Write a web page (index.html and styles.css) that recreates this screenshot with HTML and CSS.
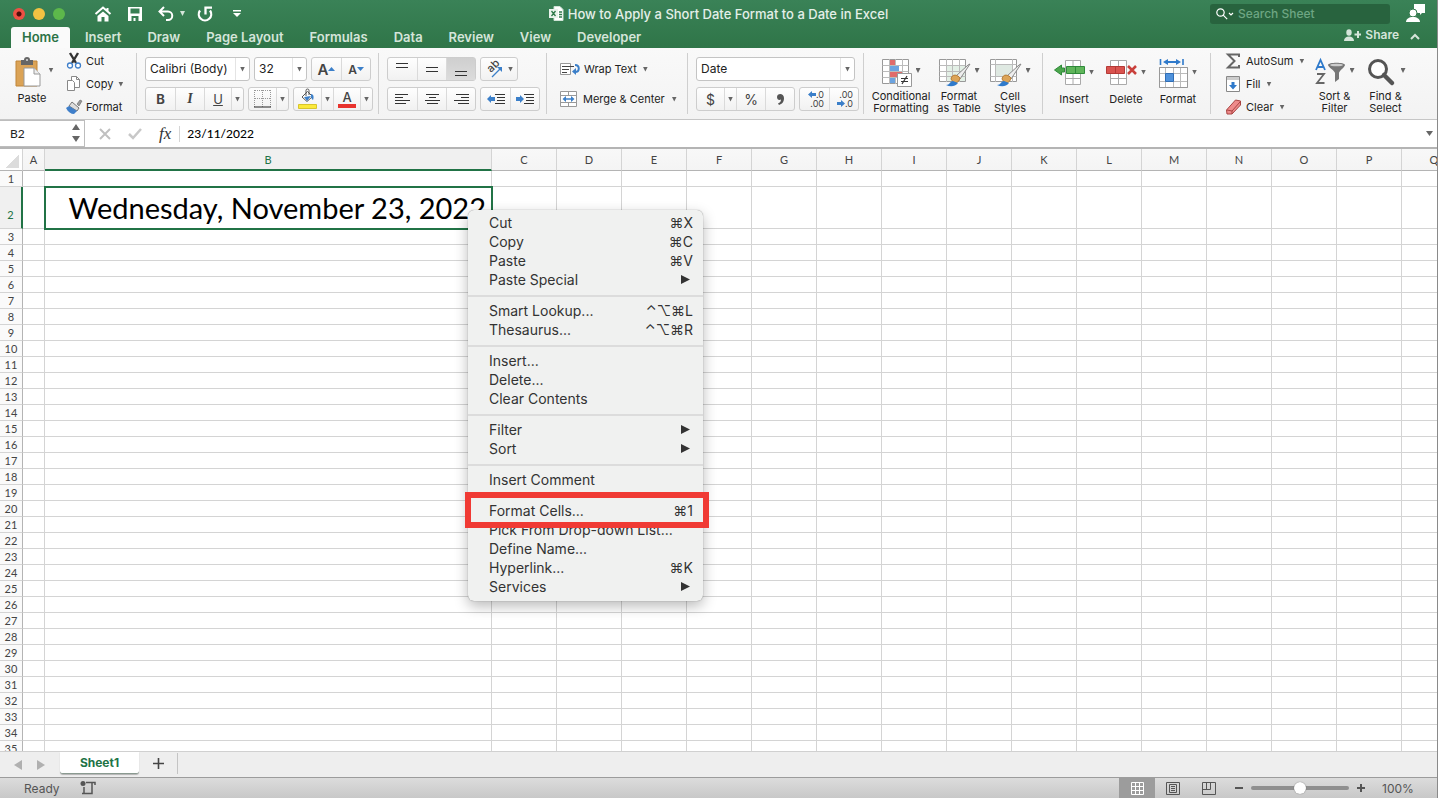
FILE: index.html
```
<!DOCTYPE html>
<html lang="en">
<head>
  <meta charset="UTF-8">
  <title>How to Apply a Short Date Format to a Date in Excel</title>
  <link rel="stylesheet" href="styles.css">
</head>
<body>

  <header class="top">
    <div class="titlebar">
      <div class="quick">
        <button class="light red" aria-label="Close"></button>
        <button class="light yellow" aria-label="Minimize"></button>
        <button class="light green" aria-label="Zoom"></button>
        <button class="q home" aria-label="Home"><svg width="18" height="16" viewBox="0 0 18 16"><path d="M1.500 8 9 1.500 16.500 8M13.500 2v3" fill="none" stroke="#fff" stroke-width="2"/><path d="M9 5.500 14.500 10v5.500H10.500V11h-3v4.500h-4V10z" fill="#fff"/></svg></button>
        <button class="q" aria-label="Save"><svg width="14" height="14" viewBox="0 0 14 14"><path d="M0 0h14v14H0zM2.500 1.500v5h9v-5zM3.500 9v5h2v-3h2v3h3V9z" fill="#fff" fill-rule="evenodd"/></svg></button>
        <button class="q undo" aria-label="Undo"><svg width="16" height="16" viewBox="0 0 16 16"><path d="M6 1 1.500 5.500 6 10M1.500 5.500h8.500a4.200 4.200 0 0 1 0 8.500H8" fill="none" stroke="#fff" stroke-width="2"/></svg></button>
        <i class="caret light-caret"></i>
        <button class="q redo" aria-label="Redo"><svg width="16" height="16" viewBox="0 0 16 16"><path d="M3 4.500A6.200 6.200 0 1 0 13 4.500M8.500 8.500V1.700H15" fill="none" stroke="#fff" stroke-width="2.300"/></svg></button>
        <button class="q" aria-label="Customize toolbar"><svg width="8" height="8" viewBox="0 0 8 8"><path d="M0 0h8v1.500H0zM0 3h8L4 7z" fill="#fff"/></svg></button>
      </div>
      <div class="doc">
        <svg width="15" height="15" viewBox="0 0 15 15"><path d="M5 .5h6l3 3v11H5z" fill="#fff" stroke="#cfe3d6"/><path d="M0 3h9v9H0z" fill="#e9f3ec"/><path d="m2.500 5 4 5m0-5-4 5M10 6h3M10 8.500h3M10 11h3" stroke="#2f7a4b" stroke-width="1.300"/></svg>
        <span>How to Apply a Short Date Format to a Date in Excel</span>
      </div>
      <div class="right">
        <label class="search">
          <svg width="18" height="12" viewBox="0 0 18 12"><circle cx="4.500" cy="4.500" r="3.700" fill="none" stroke="#fff" stroke-width="1.200"/><path d="m7.200 7.200 4 4M13 5l2 2 2-2" fill="none" stroke="#fff" stroke-width="1.200"/></svg>
          <input type="text" placeholder="Search Sheet" aria-label="Search Sheet">
        </label>
        <svg width="19" height="19" viewBox="0 0 19 19"><path d="M8 0h11v9h-3l-2 2V9H8z" fill="#fff"/><circle cx="7" cy="9" r="4" fill="#fff" stroke="#32794c"/><path d="M0 18c0-3 3-5 7-5s7 2 7 5z" fill="#fff"/></svg>
      </div>
    </div>
    <nav class="tabs">
      <button class="active">Home</button>
      <button>Insert</button>
      <button>Draw</button>
      <button>Page Layout</button>
      <button>Formulas</button>
      <button>Data</button>
      <button>Review</button>
      <button>View</button>
      <button>Developer</button>
      <button class="share"><svg width="17" height="12" viewBox="0 0 17 12"><ellipse cx="5" cy="3.500" rx="2.700" ry="3.300"/><path d="M0 12c0-3 2-4.500 5-4.500S10 9 10 12zM13 2h2v2.500h2v2h-2V9h-2V6.500h-2.500v-2H13z"/></svg>Share</button>
      <button class="collapse" aria-label="Collapse ribbon"><svg width="10" height="6" viewBox="0 0 10 6"><path d="m1 5 4-4 4 4" fill="none" stroke="#d5e5da" stroke-width="2"/></svg></button>
    </nav>
  </header>

  <section class="ribbon">
    <div class="group clipboard">
      <button class="big paste">
        <span class="pic"><svg width="26" height="30" viewBox="0 0 26 30"><path d="M1 4h21v25H1z" fill="#dba356" stroke="#c08538"/><path d="M6 3h3a3 3 0 0 1 6 0h3v5H6z" fill="#666"/><circle cx="12" cy="3" r="1" fill="#ddd"/><path d="M9 11h10l6 6v12H9z" fill="#fff" stroke="#999"/><path d="M19 11v6h6" fill="#eee" stroke="#999"/></svg><i class="caret"></i></span>
        Paste
      </button>
      <div class="stack">
        <button><svg width="16" height="16" viewBox="0 0 16 16"><path d="m4 0 6 10M12 0 6 10" stroke="#333" stroke-width="2.400"/><circle cx="4" cy="12.500" r="2.500" fill="#fff" stroke="#3f7fca" stroke-width="1.300"/><circle cx="12" cy="12.500" r="2.500" fill="#fff" stroke="#3f7fca" stroke-width="1.300"/></svg>Cut</button>
        <button><svg width="16" height="16" viewBox="0 0 16 16"><path d="M5.500.5h5l3 3v8h-8z" fill="#fff" stroke="#888"/><path d="M10.500.5v3h3" fill="none" stroke="#888"/><path d="M1.500 4.500h5l2 2v8h-7z" fill="#fff" stroke="#888"/></svg>Copy<i class="caret"></i></button>
        <button><svg width="16" height="16" viewBox="0 0 16 16"><path d="m11 5 3-4 2 1-3 5z" fill="#999" stroke="#666" stroke-width=".6"/><path d="m6 3 7 6-2 3-8-5z" fill="#ddd" stroke="#777"/><path d="m3 7 8 5-3 3c-3 0-6-2-8-6z" fill="#3f7fca"/></svg>Format</button>
      </div>
    </div>

    <div class="group font">
      <div class="row">
        <label class="select name"><select aria-label="Font"><option>Calibri (Body)</option></select><i class="caret"></i></label>
        <label class="select size"><select aria-label="Font size"><option>32</option></select><i class="caret"></i></label>
        <div class="set">
          <button aria-label="Increase font size"><b class="a-big">A</b><svg width="7" height="4" viewBox="0 0 7 4"><path d="M0 4h7L3.500 0z" fill="#3b7fc9"/></svg></button>
          <button aria-label="Decrease font size"><b class="a-small">A</b><svg width="7" height="4" viewBox="0 0 7 4"><path d="M0 0h7L3.500 4z" fill="#3b7fc9"/></svg></button>
        </div>
      </div>
      <div class="row">
        <div class="set">
          <button><b>B</b></button>
          <button><em>I</em></button>
          <button class="pair"><u>U</u></button>
          <button class="drop" aria-label="Underline style"><i class="caret"></i></button>
        </div>
        <div class="set">
          <button class="pair" aria-label="Borders"><svg width="18" height="18" viewBox="0 0 18 18"><path d="M1 .5h16M1 8.500h16M.5 0v17M8.500 0v17M16.500 0v17" stroke="#999" stroke-dasharray="1 1"/><path d="M0 17h17" stroke="#222"/></svg></button>
          <button class="drop" aria-label="Border style"><i class="caret"></i></button>
        </div>
        <div class="set">
          <button class="pair" aria-label="Fill color"><svg width="19" height="20" viewBox="0 0 19 20"><path d="M5 7 9.500 2.500l5 5L9 12.500 4 8z" fill="#fff" stroke="#555"/><path d="M8 7V1.500a1.500 1.500 0 0 1 3 0V6" fill="none" stroke="#555"/><path d="m6 8 7-1-4 5zM13 5c3 0 3 4 2 6-2-1-2-3-2-6" fill="#3b7fc9"/><path d="M.5 15.500h18v4H.5z" fill="#fbe93a" stroke="#d8c52c"/></svg></button>
          <button class="drop" aria-label="Fill palette"><i class="caret"></i></button>
          <button class="pair font-color" aria-label="Font color"><b>A</b></button>
          <button class="drop" aria-label="Font palette"><i class="caret"></i></button>
        </div>
      </div>
    </div>

    <div class="group align">
      <div class="row">
        <div class="set">
          <button aria-label="Top align"><svg width="15" height="16" viewBox="0 0 15 16"><path d="M1 2.500h12M1 6.500h12" stroke="#333"/></svg></button>
          <button aria-label="Middle align"><svg width="15" height="16" viewBox="0 0 15 16"><path d="M1 6.500h12M1 10.500h12" stroke="#333"/></svg></button>
          <button class="on" aria-label="Bottom align"><svg width="15" height="16" viewBox="0 0 15 16"><path d="M1 10.500h12M1 14.500h12" stroke="#333"/></svg></button>
        </div>
        <div class="set">
          <button class="angle" aria-label="Orientation"><svg width="18" height="18" viewBox="0 0 18 18"><text transform="translate(6 13) rotate(-45)" font-family="Inter, sans-serif" font-size="11" font-weight="500" fill="#444">ab</text><path d="m7 17 8-8" stroke="#3b7fc9" stroke-width="1.300"/><path d="M17 7v5l-5-5z" fill="#3b7fc9"/></svg><i class="caret"></i></button>
        </div>
      </div>
      <div class="row">
        <div class="set">
          <button aria-label="Align left"><svg width="15" height="12" viewBox="0 0 15 12"><path d="M0 1.500h13M0 4.500h8M0 7.500h15M0 10.500h11" stroke="#333"/></svg></button>
          <button aria-label="Center"><svg width="15" height="12" viewBox="0 0 15 12"><path d="M1 1.500h13M4 4.500h7M0 7.500h15M2 10.500h11" stroke="#333"/></svg></button>
          <button aria-label="Align right"><svg width="15" height="12" viewBox="0 0 15 12"><path d="M2 1.500h13M7 4.500h8M0 7.500h15M4 10.500h11" stroke="#333"/></svg></button>
        </div>
        <div class="set">
          <button aria-label="Decrease indent"><svg width="18" height="12" viewBox="0 0 18 12"><path d="M8 1.500h10M10 4.500h8M10 7.500h8M8 10.500h10" stroke="#333"/><path d="M0 6 4 2v2h4v4H4v2z" fill="#3b7fc9"/></svg></button>
          <button aria-label="Increase indent"><svg width="18" height="12" viewBox="0 0 18 12"><path d="M8 1.500h10M10 4.500h8M10 7.500h8M8 10.500h10" stroke="#333"/><path d="M8 6 4 2v2H0v4h4v2z" fill="#3b7fc9"/></svg></button>
        </div>
      </div>
    </div>

    <div class="group wrap">
      <button><svg width="20" height="14" viewBox="0 0 20 14"><path d="M.5 1.500h10v11H.5z" fill="#fff" stroke="#999"/><path d="M2 4.500h12M2 7.500h7M2 10.500h5" stroke="#444"/><path d="M15 3c5 0 5 7 0 7" fill="none" stroke="#3b7fc9" stroke-width="2"/><path d="M16 6v7l-4-3.500z" fill="#3b7fc9"/></svg>Wrap Text<i class="caret"></i></button>
      <button class="merge"><svg width="18" height="16" viewBox="0 0 18 16"><path d="M.5.5h16v15H.5zM.5 4.500h16M.5 11.500h16M8.500.5v4M8.500 11.500v4" fill="#fff" stroke="#999"/><path d="M4 8h9" stroke="#3b7fc9" stroke-width="1.500"/><path d="M6 5v6L2.500 8zM11 5v6l3.500-3z" fill="#3b7fc9"/></svg>Merge &amp; Center<i class="caret"></i></button>
    </div>

    <div class="group number">
      <div class="row">
        <label class="select format"><select aria-label="Number format"><option>Date</option></select><i class="caret"></i></label>
      </div>
      <div class="row">
        <div class="set">
          <button class="pair sign">$</button>
          <button class="drop" aria-label="Currency"><i class="caret"></i></button>
          <button class="sign">%</button>
          <button aria-label="Comma style"><svg width="7" height="11" viewBox="0 0 7 11"><path d="M0 3c0-4 7-4 7 1 0 4-2 6-5 7L1 9.500c2-1 3-2 3-4C2 6.500 0 5.500 0 3" fill="#555"/></svg></button>
        </div>
        <div class="set">
          <button class="decimals"><span class="line"><svg width="8" height="7" viewBox="0 0 8 7"><path d="M0 3.500 4 0v2h4v3H4v2z" fill="#3b7fc9"/></svg>.0</span><span class="line">.00</span></button>
          <button class="decimals"><span class="line">.00</span><span class="line"><svg width="8" height="7" viewBox="0 0 8 7"><path d="M8 3.500 4 0v2H0v3h4v2z" fill="#3b7fc9"/></svg>.0</span></button>
        </div>
      </div>
    </div>

    <div class="group styles">
      <button class="big wide">
        <span class="pic"><svg width="31" height="28" viewBox="0 0 31 28"><path d="M.5.5h26v24H.5z" fill="#fff" stroke="#999"/><path d="M.5 6.500h26M.5 12.500h26M.5 18.500h26M7.500 0v25M13.500 0v25M20.500 0v25" stroke="#bbb"/><path d="M8 1h5v5H8zM8 13h12v5H8z" fill="#e06b6b"/><path d="M8 7h9v5H8zM8 19h5v5H8z" fill="#6ba3e0"/><path d="M15.500 14.500h14v13h-14z" fill="#fff" stroke="#999"/><path d="M19 19.500h7M19 22.500h7M25 17l-5 8" stroke="#333" stroke-width="1.200"/></svg><i class="caret"></i></span>
        Conditional<br>Formatting
      </button>
      <button class="big">
        <span class="pic"><svg width="33" height="28" viewBox="0 0 33 28"><path d="M.5.5h26v22H.5z" fill="#fff" stroke="#999"/><path d="M8 7h18v15H8z" fill="#e3f0e6"/><path d="M.5 6.500h26M.5 12.500h26M.5 17.500h26M7.500 0v23M13.500 0v23M20.500 0v23" stroke="#bbb"/><path d="M31 5 21 20l-4-3L29 6z" fill="#eee" stroke="#888"/><path d="M12 20c1-6 7-4 9-1-1 5-6 7-9 1" fill="#dca457" stroke="#b57c34"/><path d="M7 26c4 0 4-4 7-4l5 2c-3 4-8 4-12 2" fill="#2f7acb"/></svg><i class="caret"></i></span>
        Format<br>as Table
      </button>
      <button class="big">
        <span class="pic"><svg width="33" height="28" viewBox="0 0 33 28"><path d="M.5.5h26v22H.5z" fill="#fff" stroke="#999"/><path d="M.5 5.500h26M.5 17.500h26M5.500 0v23M22.500 0v23" stroke="#bbb"/><path d="M6 6h16v11H6z" fill="#dfe9e2"/><path d="M31 5 21 20l-4-3L29 6z" fill="#eee" stroke="#888"/><path d="M12 20c1-6 7-4 9-1-1 5-6 7-9 1" fill="#dca457" stroke="#b57c34"/><path d="M7 26c4 0 4-4 7-4l5 2c-3 4-8 4-12 2" fill="#2f7acb"/></svg><i class="caret"></i></span>
        Cell<br>Styles
      </button>
    </div>

    <div class="group cells">
      <button class="big">
        <span class="pic"><svg width="32" height="28" viewBox="0 0 32 28"><path d="M11.500.5h15v24h-15zM19 0v25M11 18.500h16" fill="#fff" stroke="#aaa"/><path d="M12.500 6.500h18v7h-18zM21.500 6v8" fill="#5fb55a" stroke="#2f8a3a"/><path d="m.5 10 7-5v3h3v4h-3v3z" fill="#4ca64c" stroke="#2f8a3a"/></svg><i class="caret"></i></span>
        Insert
      </button>
      <button class="big">
        <span class="pic"><svg width="32" height="28" viewBox="0 0 32 28"><path d="M4.500.5h16v24h-16zM12.500 0v25M4 18.500h17" fill="#fff" stroke="#aaa"/><path d="M.5 6.500h18v7H.5zM9.500 6v8" fill="#d9534f" stroke="#b53a37"/><path d="m22 6 8 8m0-8-8 8" stroke="#c9403b" stroke-width="2.500"/></svg><i class="caret"></i></span>
        Delete
      </button>
      <button class="big">
        <span class="pic"><svg width="30" height="30" viewBox="0 0 30 30"><path d="M1.500 0v6M24 0v6" stroke="#2f7acb" stroke-width="1.600"/><path d="M6 3h14" stroke="#2f7acb" stroke-width="2"/><path d="M9 0v6L4 3zM17 0v6l5-3z" fill="#2f7acb"/><path d="M.5 8.500h28v20H.5zM.5 14.500h28M.5 22.500h28M6.500 8v21M14.500 8v21M21.500 8v21" fill="#fff" stroke="#bbb"/><path d="M.5 8.500h28v20H.5z" fill="none" stroke="#999"/><path d="M6.500 14.500h8v8h-8z" fill="#4f92dc" stroke="#2f6db5"/></svg><i class="caret"></i></span>
        Format
      </button>
    </div>

    <div class="group editing">
      <div class="stack">
        <button><svg width="15" height="16" viewBox="0 0 15 16"><path d="M13 4V1.500H2L8.500 8 2 14.500h11V12" fill="none" stroke="#666" stroke-width="2"/></svg>AutoSum<i class="caret"></i></button>
        <button><svg width="15" height="16" viewBox="0 0 15 16"><path d="M.5.5h13v15H.5z" fill="#fff" stroke="#888"/><path d="M1 1h12v3H1z" fill="#ccc"/><path d="M5.500 6h3v3H11l-4 4.500L3 9h2.500z" fill="#2f7acb"/></svg>Fill<i class="caret"></i></button>
        <button><svg width="15" height="16" viewBox="0 0 15 16"><path d="m.5 11 9-10 5 1v4L6 15H1z" fill="#ee8b8b" stroke="#a94442"/><path d="m1 11 5 1v3M6 12l8-9" fill="none" stroke="#a94442"/></svg>Clear<i class="caret"></i></button>
      </div>
      <button class="big">
        <span class="pic"><svg width="32" height="28" viewBox="0 0 32 28"><path d="M1 11 5.500 1 10 11M2.500 8h6" fill="none" stroke="#2f7acb" stroke-width="1.800"/><path d="M2 15h7L2 24h7.500" fill="none" stroke="#666" stroke-width="1.800"/><path d="M13 6c0-3 17-3 17 0 0 2-6 6-6 8v6l-4 3v-9c0-2-7-6-7-8" fill="#777"/><ellipse cx="21.500" cy="6" rx="6.500" ry="1.300" fill="#ccc"/></svg><i class="caret"></i></span>
        Sort &amp;<br>Filter
      </button>
      <button class="big">
        <span class="pic"><svg width="32" height="28" viewBox="0 0 32 28"><circle cx="12" cy="10" r="8.500" fill="#fff" stroke="#555" stroke-width="3"/><path d="m18 16 8 8" stroke="#555" stroke-width="4.500" stroke-linecap="round"/></svg><i class="caret"></i></span>
        Find &amp;<br>Select
      </button>
    </div>
  </section>

  <section class="formula-bar">
    <div class="name-box">
      <input type="text" value="B2" aria-label="Name box">
      <svg width="8" height="19" viewBox="0 0 8 19"><path d="M0 6h8L4 0zM0 12h8l-4 6z" fill="#666"/></svg>
    </div>
    <button aria-label="Cancel"><svg width="12" height="12" viewBox="0 0 12 12"><path d="m1 1 10 10M11 1 1 11" stroke="#c0c0c0" stroke-width="2"/></svg></button>
    <button aria-label="Enter"><svg width="14" height="12" viewBox="0 0 14 12"><path d="m1 6 4 4 8-9" fill="none" stroke="#c8c8c8" stroke-width="2.500"/></svg></button>
    <button class="fx">fx</button>
    <input class="formula" type="text" value="23/11/2022" aria-label="Formula">
    <i class="caret expand"></i>
  </section>

  <main class="sheet">
    <table id="grid">
      <colgroup></colgroup>
      <thead></thead>
      <tbody></tbody>
    </table>

    <ul class="menu">
      <li>Cut<span>⌘X</span></li>
      <li>Copy<span>⌘C</span></li>
      <li>Paste<span>⌘V</span></li>
      <li>Paste Special<i class="sub"></i></li>
      <li class="sep"></li>
      <li>Smart Lookup...<span>⌃⌥⌘L</span></li>
      <li>Thesaurus...<span>⌃⌥⌘R</span></li>
      <li class="sep"></li>
      <li>Insert...</li>
      <li>Delete...</li>
      <li>Clear Contents</li>
      <li class="sep"></li>
      <li>Filter<i class="sub"></i></li>
      <li>Sort<i class="sub"></i></li>
      <li class="sep"></li>
      <li>Insert Comment</li>
      <li class="sep"></li>
      <li class="marked">Format Cells...<span>⌘1</span></li>
      <li>Pick From Drop-down List...</li>
      <li>Define Name...</li>
      <li>Hyperlink...<span>⌘K</span></li>
      <li>Services<i class="sub"></i></li>
    </ul>
  </main>

  <footer>
    <div class="sheet-tabs">
      <button class="arrow" aria-label="Previous sheet"><svg width="8" height="10" viewBox="0 0 8 10"><path d="M8 0v10L0 5z" fill="#b0b0b0"/></svg></button>
      <button class="arrow" aria-label="Next sheet"><svg width="8" height="10" viewBox="0 0 8 10"><path d="M0 0v10l8-5z" fill="#b0b0b0"/></svg></button>
      <button class="tab">Sheet1</button>
      <button class="add" aria-label="New sheet"><svg width="11" height="11" viewBox="0 0 11 11"><path d="M5.500 0v11M0 5.500h11" stroke="#444" stroke-width="1.600"/></svg></button>
    </div>
    <div class="status">
      <span class="ready">Ready</span>
      <svg width="16" height="14" viewBox="0 0 16 14"><circle cx="3" cy="2.500" r="2.500" fill="#555"/><path d="M6 1.500h9V4M12 1.500v11H2M4 6v6.500" fill="none" stroke="#555" stroke-width="1.500"/></svg>
      <button class="view first on" aria-label="Normal"><svg width="13" height="13" viewBox="0 0 13 13"><path d="M.5.5h12v12H.5zM.5 4.500h12M.5 8.500h12M4.500.5v12M8.500.5v12" fill="none" stroke="#fff"/></svg></button>
      <button class="view" aria-label="Page layout"><svg width="14" height="13" viewBox="0 0 14 13"><path d="M.5.5h13v12H.5zM3.500 2.500h7v8h-7zM5 4.500h4M5 6.500h4M5 8.500h4" fill="none" stroke="#555"/></svg></button>
      <button class="view" aria-label="Page break"><svg width="14" height="13" viewBox="0 0 14 13"><path d="M.5.5h13v12H.5zM.5 7.500h8v-7M4.500.5v7" fill="none" stroke="#555"/></svg></button>
      <button class="zoom-btn" aria-label="Zoom out"><svg width="8" height="8" viewBox="0 0 8 8"><path d="M0 4h8" stroke="#555" stroke-width="2"/></svg></button>
      <input type="range" min="0" max="100" value="50" aria-label="Zoom">
      <button class="zoom-btn" aria-label="Zoom in"><svg width="8" height="8" viewBox="0 0 8 8"><path d="M0 4h8M4 0v8" stroke="#555" stroke-width="2"/></svg></button>
      <span class="percent">100%</span>
    </div>
  </footer>

  <script>
    const columns = 'ABCDEFGHIJKLMNOPQ'.split('');
    const active = { col: 'B', row: 2, text: 'Wednesday, November 23, 2022' };

    const table = document.querySelector('#grid');
    table.querySelector('colgroup').innerHTML =
      '<col class="c-num"><col class="c-a"><col class="c-b">' + '<col class="c">'.repeat(columns.length - 2);

    table.querySelector('thead').innerHTML = `<tr><th class="corner"></th>${columns.map(c =>
      `<th class="${c === active.col ? 'current' : ''}">${c}</th>`).join('')}</tr>`;

    let rows = '';
    for (let r = 1; r <= 35; r++) {
      const cells = columns.map(c =>
        r === active.row && c === active.col ? `<td class="selected">${active.text}</td>` : '<td></td>').join('');
      rows += `<tr class="${r === active.row ? 'current' : ''}"><th>${r}</th>${cells}</tr>`;
    }
    table.querySelector('tbody').innerHTML = rows;
  </script>
</body>
</html>
```
FILE: styles.css
```
* {
  box-sizing: border-box;
}

body {
  margin: 0;
  height: 100vh;
  display: flex;
  flex-direction: column;
  overflow: hidden;
  font-family: Inter, "Liberation Sans", sans-serif;
  font-size: 11px;
  color: #222;
  background: #fff;
  border-right: 1px solid #8a8a8a;
}

button, input, select {
  font: inherit;
  color: inherit;
  margin: 0;
  padding: 0;
  border: none;
  background: none;
}

svg {
  display: block;
  flex: none;
  overflow: visible;
}

.caret {
  width: 5px;
  height: 5px;
  background: #666;
  clip-path: polygon(0 0, 100% 0, 50% 100%);
  flex: none;
}

.light-caret { background: #d5e5da; }

/* title bar */
.top {
  background: linear-gradient(#3a8257, #2f7548);
}

.titlebar {
  height: 27px;
  display: grid;
  grid-template-columns: 1fr auto 1fr;
  align-items: center;
}

.quick {
  display: flex;
  align-items: center;
  padding-left: 13px;
}

.light {
  width: 12px;
  height: 12px;
  margin-right: 8px;
  border-radius: 50%;
}

.light.red { background: radial-gradient(circle, #4d0f0b 2px, #ee5044 3px); }
.light.yellow { background: #f3c242; }
.light.green { background: #5db84b; }

.q { margin-right: 16px; }
.q.home { margin-left: 21px; }
.q.undo { margin-right: 6px; }
.q.redo { margin-left: 12px; margin-right: 20px; }

.doc {
  display: flex;
  align-items: center;
  gap: 4px;
  color: #e4efe8;
  font-size: 13px;
  font-weight: 500;
}

.right {
  display: flex;
  align-items: center;
  justify-content: flex-end;
  gap: 16px;
  padding-right: 12px;
}

.search {
  display: flex;
  align-items: center;
  gap: 4px;
  width: 180px;
  height: 20px;
  padding-left: 6px;
  border-radius: 3px;
  background: #28633e;
}

.search input {
  width: 100%;
  font-size: 12px;
  font-weight: 500;
  outline: none;
}

.search input::placeholder { color: #6ea683; }

.tabs {
  display: flex;
  height: 21px;
  padding-left: 11px;
}

.tabs button {
  display: flex;
  align-items: center;
  padding: 0 13px 2px;
  font-size: 13px;
  font-weight: 600;
  color: #d5e5da;
}

.tabs .active {
  padding: 0 11px 2px;
  margin-right: 2px;
  color: #2b7346;
  background: #fafafa;
  border-radius: 3px 3px 0 0;
}

.tabs .share {
  margin-left: auto;
  padding: 0 11px 6px 0;
  gap: 4px;
  font-size: 12px;
}

.share svg { fill: #d5e5da; }

.tabs .collapse { padding: 0 17px 2px 0; }

/* ribbon */
.ribbon {
  display: flex;
  height: 72px;
  background: linear-gradient(#f9f9f9, #f3f3f3);
  border-bottom: 1px solid #c6c6c6;
}

.group {
  flex: none;
  display: flex;
  flex-direction: column;
  margin: 5px 0;
  border-right: 1px solid #cfcfcf;
}

.clipboard, .styles, .cells, .editing { flex-direction: row; }

.clipboard { width: 137px; }
.font { width: 242px; padding-left: 8px; }
.align { width: 168px; padding-left: 8px; }
.wrap { width: 141px; padding-left: 13px; }
.number { width: 176px; padding-left: 8px; }
.styles { width: 179px; padding-left: 8px; gap: 7px; }
.cells { width: 168px; padding-left: 9px; gap: 8px; }
.editing { border: none; padding-left: 15px; }

.row {
  display: flex;
  gap: 4px;
  height: 24px;
  margin: 4px 0 2px;
}

.set {
  display: flex;
  border: 1px solid #cdcdcd;
  border-radius: 3px;
  background: linear-gradient(#fefefe, #f1f1f1);
}

.set button {
  display: flex;
  align-items: center;
  justify-content: center;
  width: 29px;
  border-left: 1px solid #dadada;
  font-size: 13px;
  color: #444;
}

.set button:first-child { border-left: none; }
.set .pair { width: 27px; }

.set .drop {
  width: 12px;
  border-left: 1px solid #dadada;
}

.set .on { background: linear-gradient(#cfcfcf, #dcdcdc); }
.set .angle { width: 36px; gap: 5px; }
.set .sign { font-size: 14px; }
.a-big { font-size: 15px; font-weight: 600; }
.a-small { font-size: 12px; font-weight: 600; }
.set em { font-family: "Liberation Serif", serif; font-weight: bold; font-size: 14px; }

.font-color b {
  border-bottom: 4px solid #e8332d;
  line-height: 14px;
  padding: 0 4px;
  font-weight: 500;
}

.set .decimals {
  flex-direction: column;
  align-items: flex-end;
  padding-right: 5px;
  font-size: 9px;
  line-height: 9px;
}

.line {
  display: flex;
  align-items: center;
}

.select {
  display: flex;
  align-items: center;
  height: 24px;
  padding-right: 4px;
  border: 1px solid #c4c4c4;
  border-radius: 3px;
  background: #fff;
}

.select select {
  flex: 1;
  min-width: 0;
  height: 100%;
  padding: 0 0 2px 4px;
  appearance: none;
  font-size: 12px;
  border-right: 1px solid #e4e4e4;
}

.select .caret { margin-left: 4px; }
.select.name { width: 105px; }
.select.size { width: 53px; }
.select.format { width: 159px; }

.big {
  display: flex;
  flex-direction: column;
  align-items: center;
  width: 44px;
  padding-top: 5px;
  line-height: 12px;
  white-space: nowrap;
}

.big.wide { width: 58px; }

.pic {
  display: flex;
  align-items: center;
  gap: 3px;
  height: 32px;
  margin-bottom: 3px;
}

.pic .caret { margin-bottom: 4px; }

.big.paste {
  width: 64px;
  padding-top: 3px;
}

.paste .pic {
  gap: 8px;
  margin-left: 4px;
  margin-bottom: 4px;
}

.stack {
  display: flex;
  flex-direction: column;
  justify-content: space-between;
  height: 62px;
}

.stack button, .wrap button {
  display: flex;
  align-items: center;
  gap: 4px;
  height: 16px;
}

.stack button { white-space: nowrap; }
.clipboard .stack { padding-left: 2px; }
.editing .stack { width: 83px; }
.editing .stack button { gap: 5px; }
.editing .big { width: 51px; }

.wrap button {
  height: 24px;
  margin-top: 4px;
}

.wrap button + button { margin-top: 6px; }
.wrap .merge { gap: 5px; }
.wrap .caret { margin-left: 2px; }
.stack .caret { margin-left: 1px; }

/* formula bar */
.formula-bar {
  display: flex;
  align-items: center;
  height: 29px;
  border-bottom: 2px solid #b4b4b4;
  background: #fff;
}

.name-box {
  display: flex;
  align-items: center;
  width: 85px;
  height: 27px;
  margin-right: 14px;
  padding: 0 4px 0 10px;
  border: 1px solid #bdbdbd;
  border-left: none;
}

.name-box input {
  flex: 1;
  min-width: 0;
  font-family: Lato, sans-serif;
  font-size: 12px;
}

.formula-bar button { margin-right: 17px; }

.formula-bar .fx {
  margin-right: 8px;
  font-family: "Liberation Serif", serif;
  font-style: italic;
  font-size: 17px;
  color: #333;
}

.formula {
  flex: 1;
  height: 16px;
  padding-left: 7px;
  border-left: 1px solid #d5d5d5;
  font-family: Lato, sans-serif;
  font-size: 12px;
  font-weight: 500;
  color: #000;
}

.expand {
  width: 7px;
  margin-right: 4px;
}

/* sheet */
.sheet {
  flex: 1;
  min-height: 0;
  position: relative;
  overflow: hidden;
}

#grid {
  table-layout: fixed;
  width: 1467px;
  border-collapse: separate;
  border-spacing: 0;
  font-family: Lato, sans-serif;
}

.c-num { width: 23px; }
.c-a { width: 22px; }
.c-b { width: 447px; }
.c { width: 65px; }

#grid th, #grid td {
  height: 16px;
  padding: 0;
  border-right: 1px solid #d4d4d4;
  border-bottom: 1px solid #d4d4d4;
  line-height: 15px;
}

#grid th {
  font-weight: 400;
  font-size: 11px;
  color: #444;
  background: #fafafa;
}

#grid tbody th { border-right-color: #b4b4b4; }

#grid thead th {
  height: 22px;
  background: linear-gradient(#f8f8f8, #f4f4f4);
  border-bottom-color: #b4b4b4;
}

#grid thead .current {
  color: #217346;
  background: #f0f0f0;
  border-bottom: 2px solid #217346;
}

#grid .corner {
  background: linear-gradient(135deg, transparent 50%, #dcdcdc 50%) no-repeat 5px 5px / 14px 14px;
}

#grid .current th, #grid .current td { height: 42px; }

#grid .current th {
  padding-top: 14px;
  color: #217346;
  background: #f0f0f0;
  border-right: 2px solid #217346;
}

#grid .selected {
  position: relative;
  padding-right: 5px;
  text-align: right;
  font-size: 29px;
  line-height: 38px;
  white-space: nowrap;
  color: #000;
  outline: 2px solid #217346;
  outline-offset: -1px;
}

/* context menu */
.menu {
  position: absolute;
  left: 468px;
  top: 61px;
  width: 235px;
  margin: 0;
  padding: 4px 0;
  list-style: none;
  border-radius: 6px;
  background: #f0f1f0;
  box-shadow: 0 0 1px rgba(0, 0, 0, .5), 0 5px 14px rgba(0, 0, 0, .28);
  font-size: 14px;
  color: #333;
}

.menu li {
  display: flex;
  align-items: center;
  justify-content: space-between;
  height: 19px;
  padding: 0 10px 2px 21px;
  white-space: nowrap;
}

.menu .sep {
  height: 12px;
  padding: 0;
}

.sep::before {
  content: "";
  flex: 1;
  border-top: 2px solid #dcdcdc;
}

.sub {
  width: 9px;
  height: 9px;
  margin-right: 3px;
  background: #333;
  clip-path: polygon(0 0, 100% 50%, 0 100%);
}

.marked { position: relative; }

.marked::after {
  content: "";
  position: absolute;
  z-index: 1;
  inset: -10px -6px -7px -3px;
  border: 6px solid #f03a34;
}

/* footer */
.sheet-tabs {
  display: flex;
  height: 27px;
  padding-left: 14px;
  background: #eee;
  border-top: 1px solid #d0d0d0;
  border-bottom: 1px solid #9c9c9c;
}

.arrow { width: 15px; margin-right: 8px; }

.tab {
  width: 79px;
  height: 22px;
  background: #fff;
  border-bottom: 1px solid #8a9a90;
  border-radius: 0 0 3px 3px;
  box-shadow: 0 1px 1px rgba(0, 0, 0, .25);
  font-size: 12px;
  font-weight: 700;
  color: #217346;
}

.add {
  display: flex;
  align-items: center;
  justify-content: center;
  width: 39px;
  height: 21px;
  margin-top: 1px;
  border-right: 1px solid #c4c4c4;
}

.status {
  display: flex;
  align-items: center;
  height: 20px;
  padding-right: 23px;
  background: linear-gradient(#dcdcdc, #c8c8c8);
  font-size: 12px;
  color: #555;
}

.ready { margin: 0 20px 0 24px; }

.view {
  display: flex;
  align-items: center;
  justify-content: center;
  width: 36px;
  height: 20px;
}

.view.first { margin-left: auto; }
.view.on { background: #9c9c9c; }
.zoom-btn { margin: 0 8px; }

.status input {
  width: 98px;
  height: 12px;
  appearance: none;
}

.status input::-webkit-slider-runnable-track {
  height: 4px;
  border-radius: 2px;
  background: #8f8f8f;
}

.status input::-webkit-slider-thumb {
  appearance: none;
  width: 12px;
  height: 12px;
  margin-top: -4px;
  border-radius: 50%;
  background: #fff;
  box-shadow: 0 0 1px #555;
}

.percent {
  width: 32px;
  margin-left: 9px;
}
```
